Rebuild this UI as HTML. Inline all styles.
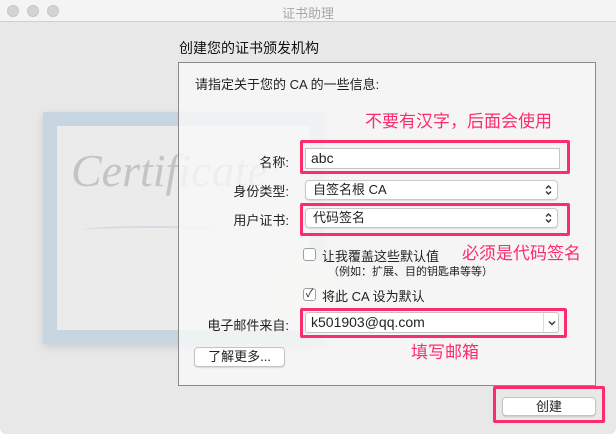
<!DOCTYPE html>
<html><head><meta charset="utf-8"><style>
*{margin:0;padding:0;box-sizing:border-box}
body{width:616px;height:436px;background:#fff;font-family:"Liberation Sans","Noto Sans CJK SC",sans-serif;font-size:13px;color:#222;position:relative;overflow:hidden}
.win{position:absolute;left:0;top:0;width:616px;height:434px;background:#e8e8e8;border-radius:0 0 6px 6px;overflow:hidden}
.tb{position:absolute;left:0;top:0;width:616px;height:22px;background:#f4f4f4;border-bottom:1px solid #cfcfcf}
.dot{position:absolute;top:5px;width:12px;height:12px;border-radius:50%;background:#d3d3d3;border:1px solid #c6c6c6}
.title{position:absolute;left:0;right:0;top:3px;text-align:center;color:#a8a8a8;font-size:13px}
.a{position:absolute;white-space:nowrap}
.cert{position:absolute;left:43px;top:112px;width:281px;height:232px;background:#c6d5df;box-shadow:0 3px 8px rgba(0,0,0,.12)}
.cert .in{position:absolute;left:14px;top:14px;right:14px;bottom:14px;background:#ebebeb}
.panel{position:absolute;left:178px;top:62px;width:418px;height:324px;border:1px solid #8a8a8a;background:rgba(248,248,248,.82)}
.field{position:absolute;background:#fff;border:1px solid #c4c4c4;font-size:14px;padding-left:5px;line-height:19px}
.pop{position:absolute;background:#fff;border:1px solid #c8c8c8;border-radius:4px;box-shadow:0 1px 1px rgba(0,0,0,.1);font-size:13px;padding-left:7px;line-height:18px}
.pink{position:absolute;border:3px solid #fb2d6c;border-radius:2px}
.red{position:absolute;color:#fb2d6c;font-size:17px;white-space:nowrap}
.lab{position:absolute;right:327px;font-size:13px;white-space:nowrap}
.cb{position:absolute;width:13px;height:13px;border:1px solid #a0a0a0;border-radius:3px;background:#fff;font-size:11px;line-height:11px;text-align:center}
.btn{position:absolute;background:#fff;border:1px solid #c4c4c4;border-radius:4px;box-shadow:0 1px 1px rgba(0,0,0,.12);text-align:center;font-size:13px;line-height:17px}
.arr{position:absolute;right:5px;top:3px}
</style></head><body>
<div class="win">
<div class="tb"><div class="dot" style="left:7px"></div><div class="dot" style="left:27px"></div><div class="dot" style="left:47px"></div><div class="title">证书助理</div></div>
<div class="cert"><div class="in">
<div class="a" style="left:14px;top:18px;font-family:'Liberation Serif',serif;font-style:italic;font-size:46px;color:#c4c4c4">Certificate</div>
<div class="a" style="left:26px;top:100px;width:140px;height:8px;border-radius:50%;border-top:2px solid #d2dbe4"></div>
<div class="a" style="left:210px;top:130px;width:70px;height:70px;border-radius:50%;background:#f0f0e6"></div>
</div></div>
<div class="a" style="left:179px;top:38px;font-size:14px;color:#111">创建您的证书颁发机构</div>
<div class="panel"></div>
<div class="a" style="left:195px;top:74px;font-size:13px">请指定关于您的 CA 的一些信息:</div>
<div class="red" style="left:365px;top:107px">不要有汉字，后面会使用</div>
<div class="pink" style="left:300px;top:140px;width:270px;height:34px"></div>
<div class="lab" style="top:152px">名称:</div>
<div class="field" style="left:305px;top:148px;width:255px;height:21px">abc</div>
<div class="lab" style="top:181px">身份类型:</div>
<div class="pop" style="left:305px;top:180px;width:253px;height:20px">自签名根 CA<svg class="arr" width="7" height="12" viewBox="0 0 7 12"><path d="M1 4.5L3.5 2L6 4.5M1 7.5L3.5 10L6 7.5" fill="none" stroke="#333" stroke-width="1.4"/></svg></div>
<div class="pink" style="left:300px;top:203px;width:270px;height:33px"></div>
<div class="lab" style="top:210px">用户证书:</div>
<div class="pop" style="left:305px;top:208px;width:253px;height:20px">代码签名<svg class="arr" width="7" height="12" viewBox="0 0 7 12"><path d="M1 4.5L3.5 2L6 4.5M1 7.5L3.5 10L6 7.5" fill="none" stroke="#333" stroke-width="1.4"/></svg></div>
<div class="cb" style="left:303px;top:248px"></div>
<div class="a" style="left:322px;top:246px">让我覆盖这些默认值</div>
<div class="a" style="left:328px;top:263px;font-size:11px">（例如：扩展、目的钥匙串等等）</div>
<div class="red" style="left:462px;top:239px">必须是代码签名</div>
<div class="cb" style="left:303px;top:288px">✓</div>
<div class="a" style="left:322px;top:286px">将此 CA 设为默认</div>
<div class="pink" style="left:300px;top:308px;width:267px;height:30px"></div>
<div class="lab" style="top:315px">电子邮件来自:</div>
<div class="field" style="left:305px;top:312px;width:254px;height:21px;border-radius:3px">k501903@qq.com<div style="position:absolute;left:237px;top:0;bottom:0;border-left:1px solid #ddd;width:16px"><svg style="position:absolute;left:4px;top:7px" width="8" height="6" viewBox="0 0 8 6"><path d="M1 1.5L4 4.5L7 1.5" fill="none" stroke="#333" stroke-width="1.4"/></svg></div></div>
<div class="red" style="left:411px;top:338px">填写邮箱</div>
<div class="btn" style="left:194px;top:347px;width:91px;height:20px">了解更多...</div>
<div class="pink" style="left:493px;top:386px;width:112px;height:37px"></div>
<div class="btn" style="left:502px;top:397px;width:94px;height:19px">创建</div>
</div>
</body></html>
